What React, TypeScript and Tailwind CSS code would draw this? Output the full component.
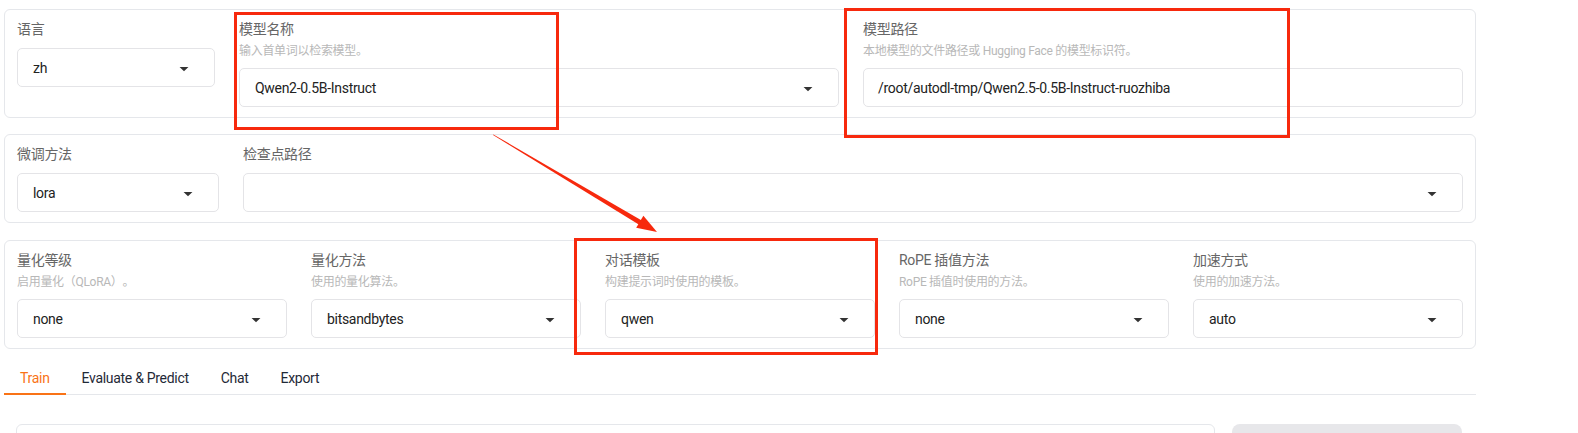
import React from "react";

function Caret() {
  return (
    <svg width="20" height="20" viewBox="0 0 18 18" className="shrink-0">
      <path d="M5 8l4 4 4-4z" fill="#333333" />
    </svg>
  );
}

function Dropdown({ value }: { value?: string }) {
  return (
    <div className="flex h-[39px] w-full items-center justify-between rounded-[5px] border border-[#e4e4e7] bg-white pl-[15px] pr-[20px]">
      <span className="text-[14px] leading-[20px] text-[#222222]">{value ?? ""}</span>
      <Caret />
    </div>
  );
}

function TextBox({ value }: { value: string }) {
  return (
    <div className="flex h-[39px] w-full items-center rounded-[5px] border border-[#e4e4e7] bg-white pl-[14px] pr-[20px]">
      <span className="text-[14px] leading-[20px] text-[#222222]">{value}</span>
    </div>
  );
}

function Label({ children }: { children: React.ReactNode }) {
  return <div className="text-[14px] leading-[20px] text-[#666666]">{children}</div>;
}

function Hint({ children }: { children: React.ReactNode }) {
  return (
    <div className="mt-[3px] text-[12px] leading-[18px] text-[#b8b8b8] [text-spacing-trim:space-all]">
      {children}
    </div>
  );
}

function Field({
  label,
  hint,
  value,
  className,
}: {
  label: string;
  hint: string;
  value: string;
  className: string;
}) {
  return (
    <div className={className}>
      <Label>{label}</Label>
      <Hint>{hint}</Hint>
      <div className="mt-[8px]">
        <Dropdown value={value} />
      </div>
    </div>
  );
}

export default function App() {
  return (
    <div className="relative h-[433px] w-[1578px] overflow-hidden bg-white font-['Roboto','Noto_Sans_CJK_SC',sans-serif] tracking-[-0.3px]">
      <div className="ml-[4px] w-[1472px] pt-[9px]">
        {/* Panel 1 */}
        <div className="flex gap-[24px] rounded-[6px] border border-[#e5e7eb] px-[12px] pb-[10px] pt-[9px]">
          <div className="w-[198px]">
            <Label>语言</Label>
            <div className="mt-[9px]">
              <Dropdown value="zh" />
            </div>
          </div>
          <Field
            className="w-[600px]"
            label="模型名称"
            hint="输入首单词以检索模型。"
            value="Qwen2-0.5B-Instruct"
          />
          <div className="w-[600px]">
            <Label>模型路径</Label>
            <Hint>本地模型的文件路径或 Hugging Face 的模型标识符。</Hint>
            <div className="mt-[8px]">
              <TextBox value="/root/autodl-tmp/Qwen2.5-0.5B-Instruct-ruozhiba" />
            </div>
          </div>
        </div>

        {/* Panel 2 */}
        <div className="mt-[16px] flex gap-[24px] rounded-[6px] border border-[#e5e7eb] px-[12px] pb-[10px] pt-[9px]">
          <div className="w-[202px]">
            <Label>微调方法</Label>
            <div className="mt-[9px]">
              <Dropdown value="lora" />
            </div>
          </div>
          <div className="flex-1">
            <Label>检查点路径</Label>
            <div className="mt-[9px]">
              <Dropdown />
            </div>
          </div>
        </div>

        {/* Panel 3 */}
        <div className="mt-[17px] flex gap-[24px] rounded-[6px] border border-[#e5e7eb] px-[12px] pb-[10px] pt-[9px]">
          <Field className="w-[270px]" label="量化等级" hint="启用量化（QLoRA）。" value="none" />
          <Field className="w-[270px]" label="量化方法" hint="使用的量化算法。" value="bitsandbytes" />
          <Field className="w-[270px]" label="对话模板" hint="构建提示词时使用的模板。" value="qwen" />
          <Field className="w-[270px]" label="RoPE 插值方法" hint="RoPE 插值时使用的方法。" value="none" />
          <Field className="w-[270px]" label="加速方式" hint="使用的加速方法。" value="auto" />
        </div>

        {/* Tabs */}
        <div className="mt-[15px] flex border-b border-[#e5e7eb]">
          <div className="-mb-px flex h-[31px] items-center border-b-2 border-[#f97316] px-[16px] text-[14px] text-[#f97316]">
            Train
          </div>
          <div className="-mb-px flex h-[31px] items-center border-b-2 border-transparent px-[16px] text-[14px] text-[#1f2937]">
            Evaluate &amp; Predict
          </div>
          <div className="-mb-px flex h-[31px] items-center border-b-2 border-transparent px-[16px] text-[14px] text-[#1f2937]">
            Chat
          </div>
          <div className="-mb-px flex h-[31px] items-center border-b-2 border-transparent px-[16px] text-[14px] text-[#1f2937]">
            Export
          </div>
        </div>

        {/* Bottom row */}
        <div className="mt-[29px] flex gap-[17px] pl-[12px]">
          <div className="h-[60px] w-[1199px] rounded-[6px] border border-[#e5e7eb] bg-white" />
          <div className="h-[60px] w-[230px] rounded-[8px] bg-[#e7e7ea]" />
        </div>
      </div>

      {/* Annotation overlays */}
      <div className="pointer-events-none absolute left-[234px] top-[12px] h-[118px] w-[325px] border-[3px] border-[#f7290d]" />
      <div className="pointer-events-none absolute left-[844px] top-[8px] h-[130px] w-[446px] border-[3px] border-[#f7290d]" />
      <div className="pointer-events-none absolute left-[574px] top-[238px] h-[117px] w-[304px] border-[3px] border-[#f7290d]" />
      <svg
        className="pointer-events-none absolute left-0 top-0"
        width="1578"
        height="433"
        viewBox="0 0 1578 433"
      >
        <polygon
          points="493,135 493.4,134.5 642.6,221 640,225.2"
          fill="#f7290d"
        />
        <polygon points="657,232 636.2,227.8 643.4,215.8" fill="#f7290d" />
      </svg>
    </div>
  );
}
